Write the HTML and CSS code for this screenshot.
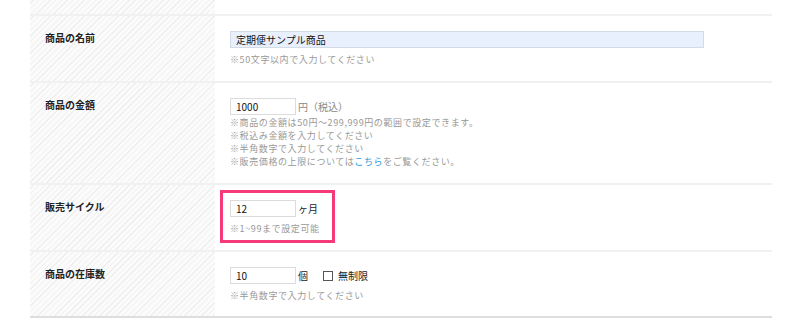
FILE: index.html
```html
<!DOCTYPE html>
<html lang="ja">
<head>
  <meta charset="UTF-8" />
  <meta name="viewport" content="width=device-width, initial-scale=1.0"/>
  <title>商品登録</title>
  <link rel="stylesheet" href="styles.css">
</head>
<body>
  <section class="form-table">
    <div class="row row-top">
      <div class="label"></div>
      <div class="value"></div>
    </div>

    <div class="row">
      <div class="label">商品の名前</div>
      <div class="value">
        <div class="field">
          <input class="input input-wide" type="text" value="定期便サンプル商品">
        </div>
        <p class="note">※50文字以内で入力してください</p>
      </div>
    </div>

    <div class="row">
      <div class="label">商品の金額</div>
      <div class="value">
        <div class="field">
          <input class="input" type="text" value="1000">
          <span class="unit unit-light">円（税込）</span>
        </div>
        <ul class="notes">
          <li>※商品の金額は50円～299,999円の範囲で設定できます。</li>
          <li>※税込み金額を入力してください</li>
          <li>※半角数字で入力してください</li>
          <li>※販売価格の上限については<a href="#">こちら</a>をご覧ください。</li>
        </ul>
      </div>
    </div>

    <div class="row">
      <div class="label">販売サイクル</div>
      <div class="value">
        <div class="highlight">
          <div class="field">
            <input class="input" type="text" value="12">
            <span class="unit">ヶ月</span>
          </div>
          <p class="note">※1~99まで設定可能</p>
        </div>
      </div>
    </div>

    <div class="row row-last">
      <div class="label">商品の在庫数</div>
      <div class="value">
        <div class="field">
          <input class="input" type="text" value="10">
          <span class="unit">個</span>
          <label class="check"><input type="checkbox"> 無制限</label>
        </div>
        <p class="note">※半角数字で入力してください</p>
      </div>
    </div>
  </section>
</body>
</html>
```

FILE: styles.css
```css
* {
  margin: 0;
  padding: 0;
  box-sizing: border-box;
  font-family: "Noto Sans CJK JP", "Noto Sans", sans-serif;
}

body {
  background: #fff;
  color: #333;
  font-size: 10px;
}

.form-table {
  width: 742px;
  margin-left: 30px;
  border-bottom: 2px solid #dedede;
}

.row {
  display: grid;
  grid-template-columns: 185px 1fr;
  border-bottom: 2px solid #f1f1f1;
}

.row-last {
  border-bottom: none;
}

.row-top .label,
.row-top .value {
  height: 14px;
  padding: 0;
}

.label {
  background: repeating-linear-gradient(135deg, #fbfbfb 0 2px, #efefef 2px 3px, #fbfbfb 3px 4px);
  padding: 15px 15px;
  font-weight: bold;
  color: #222;
  line-height: 13px;
}

.value {
  padding: 15px 15px 15px;
}

.row-last .value {
  padding-bottom: 14px;
}

.field {
  display: flex;
  align-items: center;
  height: 17px;
}

.input {
  width: 66px;
  height: 17px;
  border: 1px solid #dcdcdc;
  background: #fff;
  padding: 0 5px;
  font-size: 10px;
  color: #111;
  outline: none;
}

.input-wide {
  width: 474px;
  background: #e8f0fe;
  border-color: #d3dbe6;
}

.unit {
  margin-left: 2px;
  color: #222;
}

.unit-light {
  color: #888;
}

.note,
.notes {
  font-size: 9px;
  letter-spacing: 0.6px;
  color: #999;
  line-height: 13px;
}

.note {
  margin-top: 5px;
}

.notes {
  list-style: none;
  margin-top: 1px;
}

.notes a {
  color: #2b9be0;
  text-decoration: none;
}

.highlight {
  width: 115px;
  margin: -10px 0 -8px -10px;
  padding: 7px 7px 5px 7px;
  border: 3px solid #f53a77;
}

.check {
  display: flex;
  align-items: center;
  margin-left: 15px;
  color: #222;
}

.check input {
  appearance: none;
  width: 10px;
  height: 10px;
  border: 1px solid #555;
  background: #fff;
  margin-right: 5px;
}
```
